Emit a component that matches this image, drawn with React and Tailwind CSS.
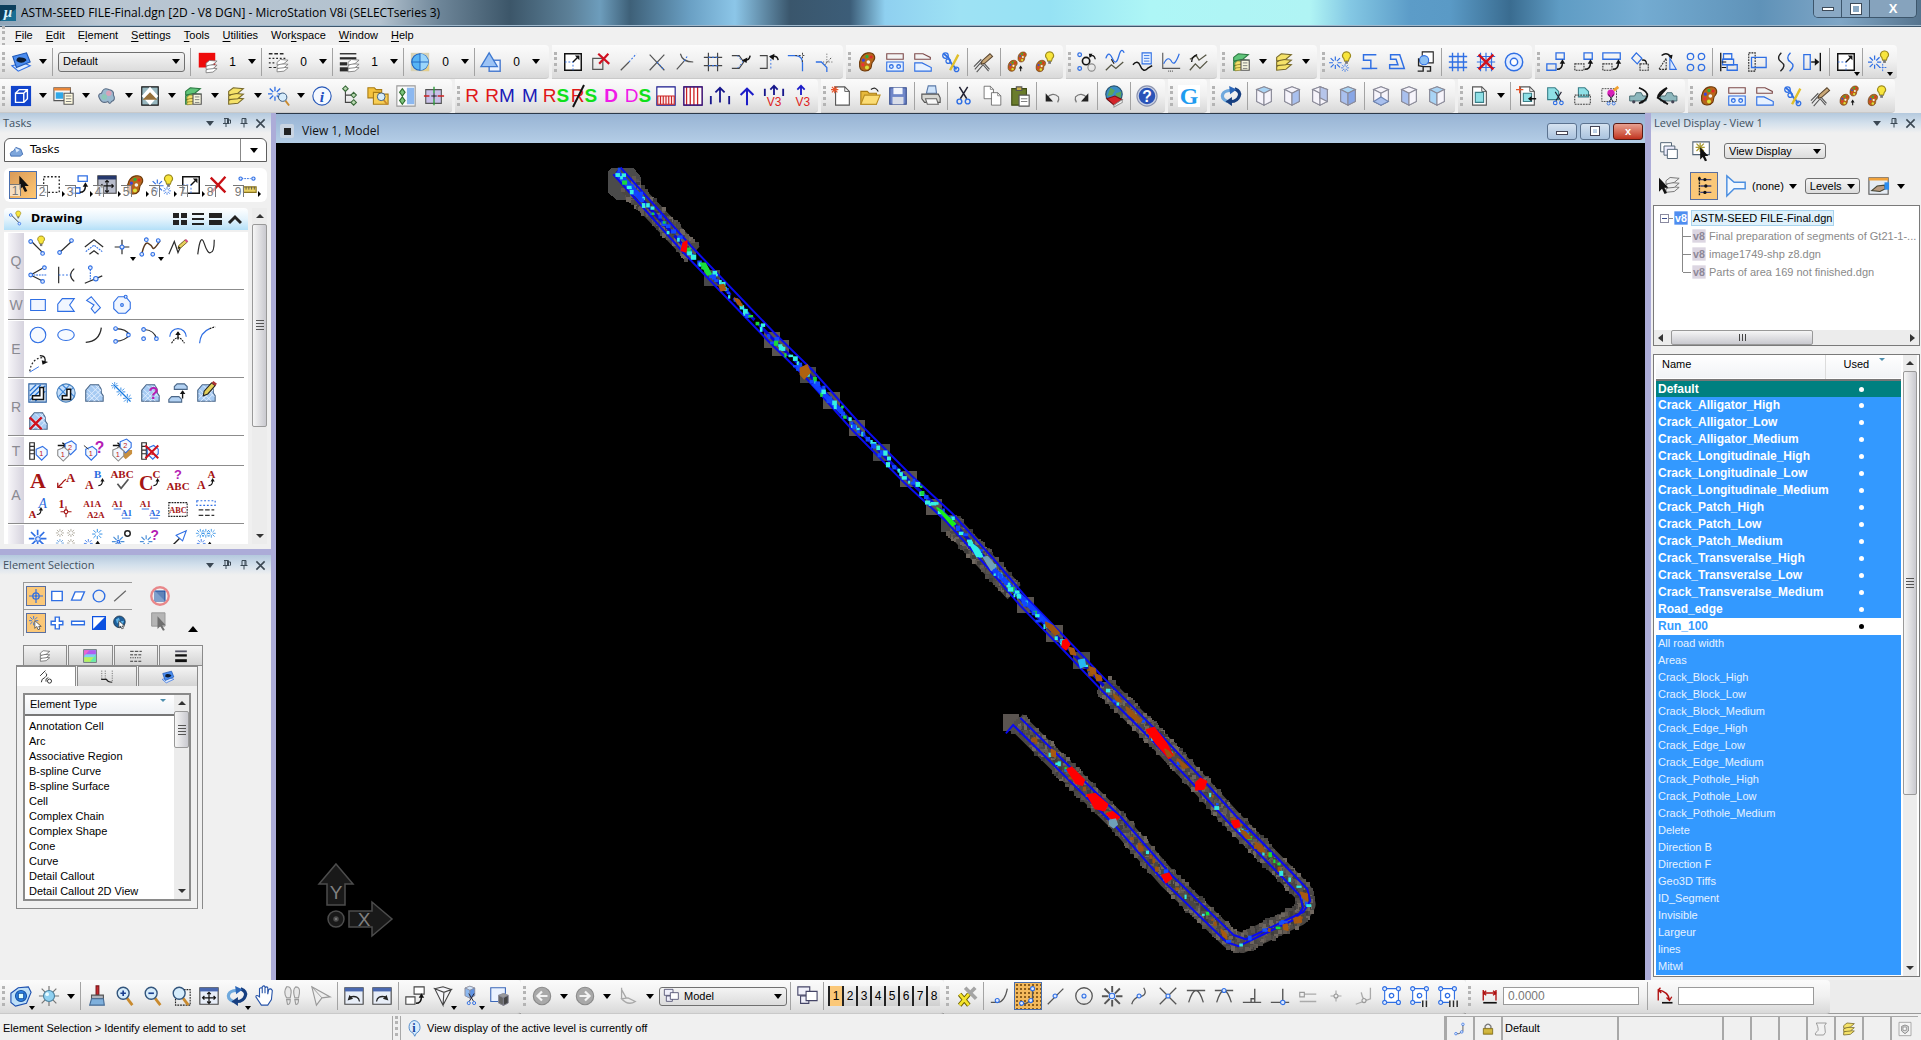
import React from "react";

/* ---------- drawing helpers (24 x 24 icon grid) ---------- */
const K = "#2b2b2b";
const B = "#2f6fe4";
const G = "#8b8b8b";
const R = "#c41414";
const N = "#17178c";

const s = (d, c = K, w = 1.4, dash) => ({ d, c, w, dash });
const f = (d, fill, c, w = 1.2) => ({ d, f: fill, c, w });
const at = (x, y, k, ...p) => ({ t: `translate(${x} ${y}) scale(${k})`, p });
const tx = (text, x, y, size, c, o = {}) => ({ text, x, y, size, c, ...o });
const ci = (x, y, r) => `M${x - r} ${y}a${r} ${r} 0 1 0 ${2 * r} 0a${r} ${r} 0 1 0 ${-2 * r} 0z`;
const re = (x, y, w, h) => `M${x} ${y}h${w}v${h}h${-w}z`;
const node = (x, y, r = 2) => f(ci(x, y, r), "#dfeaff", B);

const bulb = [f("M4 0a4 4 0 0 1 3 7l-1 3h-4l-1-3a4 4 0 0 1 3-7", "#f8e53c", "#9c8a1c"), f("M2.5 10h3v3h-3z", "#777")];
const cursor = [f("M0 0v14l3-3 2.5 5 2.4-1-2.5-5h4z", "#111")];
const palette = [
  f("M13 2c7-1 9 5 6 9c-3 2-1 4-3 8c-3 4-11 4-12-2c-1-7 2-14 9-15z", "#b8651a", "#6d3a0a"),
  f(ci(12, 6, 1.8), "#2fae3c"), f(ci(16.5, 6.5, 1.7), "#e02a2a"), f(ci(8, 10, 1.8), "#3c46d8"),
  f(ci(7.5, 15, 1.8), "#e33"), f(ci(12, 18, 2.2), "#d9e03c"), f(ci(13.5, 12, 2), "#f4f0e8"),
];
const layers = (c, e = "#444") => [
  f("M4 17l5-3 11 1-6 5-10 1z", c, e), f("M4 12l5-3 11 1-6 5-10 1z", c, e), f("M4 7l5-4 11 1-6 5-10 2z", c, e),
];
const rays = (c = B) => [s("M8 0v5M8 11v5M0 8h5M11 8h5M2 2l4 4M14 2l-4 4M2 14l4-4M14 14l-4-4", c, 1.5)];
const cube = (top, front, side) => [
  f("M12 2l8 3v13l-8 4-8-4V5z", "#fff", "#8a8a98"), f("M4 5l8-3 8 3-8 4z", top, "#8a8a98"),
  f("M4 5l8 4v13l-8-4z", front, "#8a8a98"), f("M20 5l-8 4v13l8-4z", side, "#8a8a98"),
];
const P = "#f6f4fb", Q = "#a9c0ee", SK = "#a9d4f5";
const lens = [s("M14 14l6 8", "#c98a2e", 3), f(ci(10, 9, 6.5), "#d6ecfb", "#33557c", 1.5)];
const win = [f(re(2, 3, 20, 18), "#e8eef8", "#444"), f(re(2, 3, 20, 4), "#4a68b0")];
const page = [f("M5 2h10l5 5v15H5z", "#fff", "#555"), s("M15 2v5h5", "#555", 1)];
const scissors = [s("M7 2l8 13M16 2L8 15", "#223", 1.6), s(ci(7, 18, 2.6), B, 1.6), s(ci(16, 18, 2.6), B, 1.6)];
const up = (x, y) => [s(`M${x} ${y}v-8`, "#111", 1.5), f(`M${x - 3} ${y - 5}l3-4 3 4z`, "#111")];
const hook = [s("M13 20q6 0 6-7", "#111", 1.6), f("M16 14l3-5 3 5z", "#111")];
const hatch = [
  f("M3 21V9l5-6h9l3 5v4l2 3v6z", "#a6caf2", "#4a6687"),
  s("M4 12l9 9M5 8l13 13M9 4l12 12M14 4l6 6M4 18L18 4M6 21L20 8M12 21l8-8", "#e2efff", 1),
];
const pencil = [f("M0 12l1-4L10 0l3 3L4 11z", "#e6cf5c", "#6d5a1c"), f("M9 1l2-2 3 3-2 2z", "#d64b8a"), f("M0 12l1-3 2 2z", "#111")];
const redX = [s("M3 4l16 16M19 3L4 20", "#c80f14", 2.6)];
const tag = (x, y, n, c = B) => [f(`M${x} ${y}l7-3 5 4v5l-6 6-6-6z`, "#f2f8ff", c), tx(n, x + 5.5, y + 7, 8, R)];
const v8 = (c, t) => [f(re(2, 2, 20, 20), c), tx("v8", 12, 18, 16, t, { b: 1 })];
const car = [f("M2 10h6l2-4h6l2 4h4v6H2z", "#8db7bd", "#4d7076"), f(ci(7, 17, 2), "#445"), f(ci(17, 17, 2), "#445")];
const box3 = (l) => [
  f(re(4, 4, 15, 15), "#fff", B), node(4, 4, 2.2), node(19, 4, 2.2), node(4, 19, 2.2), ...(l ? [] : [node(19, 19, 2.2)]), s(ci(11.5, 11.5, 2.4), B, 1.4),
  ...(l ? [f(re(13, 16, 10, 8), "#eee"), s(l === 1 ? "M15 17v7M19 17v7" : "M14 17v7M18 17v7M22 17v7", K, 1.6)] : []),
];

const ICONS = {
  app: [f(re(0, 0, 24, 24), "#0d3f5c"), f("M0 24L24 6v18z", "#1a6e93"), tx("μ", 12, 18, 23, "#d8f2fb", { b: 1, i: 1, serif: 1 })],
  template: [f("M2 16l13-3 7 3-13 6z", "#dcebff", B), f("M3 6l15-4 4 10-15 6z", "#4b8df0", "#1b55b5"), f("M7 11q0-5 5-4q5 0 6 3q-5 5-11 1z", "#0c1c33")],
  colorfill: [f(re(3, 2, 18, 16), "#ee0a0a"), at(8, 8, 0.75, ...layers("#fff", "#777"))],
  lstyle: [s("M2 3h18", K, 1.6, "4 2"), s("M2 8h18M2 13h8", K, 1.3, "2 2"), s("M2 18h9", K, 1.3, "3 2"), at(8, 7, 0.75, ...layers("#fff", "#777"))],
  lweight: [s("M2 3h18", K, 1.5), s("M2 8h18", K, 2.5), s("M2 14h8", K, 3.5), s("M2 20h9", K, 4.5), at(8, 7, 0.75, ...layers("#fff", "#777"))],
  transp: [f(re(2, 2, 20, 20), "#d8d2b4"), f(re(12, 12, 10, 10), "#e6cf8c"), f(ci(12, 12, 9), "#58b4f4", "#1b62c2"), f("M12 3v18a9 9 0 0 0 0-18z", "#9bd6fb"), s("M3 12h18M12 3v18", "#1e63bd", 1)],
  prio: [f(re(10, 10, 12, 12), "#eaf2ff", "#4f7fd0", 1.6), f("M10 2l9 15H1z", "#9cc3f5", "#3d78d0", 1.4)],
  scale: [f(re(3, 3, 18, 18), "#fff", "#111", 1.6), s("M3 12h9v9", B, 1, "2 2"), s("M12 12l6-6", "#111", 1.6), f("M14 5h5v5z", "#111")],
  delelem: [s(re(3, 8, 11, 12), "#555", 1.3), s("M9 3l12 11M20 3L10 14", "#d01020", 2.4)],
  ext: [s("M3 21l9-9", "#555", 1.3), s("M12 12l8-9", B, 1.2, "2 2")],
  ext2: [s("M4 4l16 17M20 4L4 21", "#555", 1.3), s("M12 12l8 9", B, 1.2, "2 2")],
  trim: [s("M3 20l8-9M7 3q2 9 14 9", "#555", 1.3), s("M11 11l4-6", B, 1.2, "2 2")],
  inter: [s("M7 2v20M17 2v20", "#444", 1.3), s("M2 7h20M2 16h20", "#444", 1.3), s("M7 7h10M7 16h10", B, 1.2, "2 2")],
  mod1: [s("M2 5h8l5 7-5 7H2", "#444", 1.2), s("M8 5l6 7-6 7", B, 1, "2 2"), s("M22 5q-1 5-5 5", "#111", 1.6), f("M19 7l-6 3 5 3z", "#111")],
  mod2: [s("M2 5h8v14H2", "#444", 1.2), s("M14 5v14", B, 1, "2 2"), s("M22 10q-1-5-6-4", "#111", 1.6), f("M18 3l-6 3 5 4z", "#111")],
  fillet: [s("M2 5h8q8 0 8 8v9", B, 1.4), s("M10 5h11M18 2v10", "#444", 1.1, "2 2")],
  chamfer: [s("M2 12h6l6 6v5", B, 1.4), s("M10 12h10M14 3v12", "#444", 1, "1 2"), s("M12 15L20 6", "#444", 1, "2 2")],
  palette,
  attrs: [s(re(3, 3, 18, 6), "#7d4a4a", 1.2), f(re(3, 12, 18, 10), "#e8f2ff", B), s(ci(8, 17, 2), B), s(ci(16, 17, 2), B)],
  attrs2: [s("M3 9V3h9l8 4v2z", "#7d4a4a", 1.2), f("M3 22V13h8l10 5v4z", "#e8f2ff", B)],
  pens: [s("M4 3l5 4 3 6 6 7", B, 2), s(ci(6, 5, 3), B), s(ci(9, 11, 2.5), B), s(ci(18, 20, 2.5), B), s("M20 4l-9 17", "#e0bf2a", 2.6)],
  hatchpen: [s("M2 20l8-9 8 9M4 23l7-8 6 7M1 17l8-8", "#555", 1.2), at(9, 3, 0.95, f("M0 12l1-4L10 0l3 3L4 11z", "#c9a878", "#5a4630"))],
  pal2: [at(0, 9, 0.6, ...palette), at(11, 0, 0.55, ...palette), at(16, 22, 0.7, s("M0 0v-6", "#111", 1.6), f("M-3-4l3-5 3 5z", "#111"))],
  pal3: [at(0, 9, 0.62, ...palette), at(13, 1, 1, ...bulb)],
  grp1: [s(ci(11, 11, 4), "#111", 1.8), s(ci(17, 18, 4), G, 1.2), s(ci(4, 4, 2), B), s(ci(4, 19, 2), B), s("M15 6q5-3 6 3", "#111", 1.4), f("M14 3l4 0-3 5z", "#111")],
  grp2: [s("M2 8q3-9 7 0t7-2t6-4", B, 1.4), s("M2 21l6-6 5 4 8-7", "#554", 1.4), s("M8 9l3 5", "#111", 1.2)],
  grp3: [f(re(11, 2, 10, 12), "#e8f2ff", B), s("M13 5h6M13 8h6M13 11h6", B, 1), s("M1 15q5-6 8 1q3 8 8 3l5-3", "#111", 1.6)],
  grp4: [s("M3 2v17h19", "#555", 1.2), s("M4 14q5-10 9-2q3 5 8-9", B, 1.3), s("M9 22h6", "#555", 1.4, "1 1")],
  grp5: [s("M2 9l7-4 3 5 8-6", "#554", 1.4), s("M2 21l6-7 5 5 8-8", "#554", 1.4), s("M4 12q0-6 6-8", "#111", 1.4)],
  levmgr: [...layers("#5fc479", "#2c7a42"), at(3, 9, 0.6, ...layers("#f3e06c", "#8a7a22")), f(re(12, 10, 9, 11), "#f7f7e0", "#555"), s("M14 13h5M14 16h5M14 19h5", "#777", 1)],
  levdisp: layers("#f5e269", "#77692a"),
  acs: [at(-1, 6, 0.85, ...rays()), at(14, 1, 1, ...bulb), at(12, 14, 0.55, ...rays())],
  acs2: [s("M20 4H6v6h8v9H4", B, 1.6), s("M14 19h7", B, 1.6)],
  acs3: [s("M5 4h10l5 15H4v-4h9l-2-6H5z", B, 1.6)],
  acs4: [f(re(9, 1, 12, 12), "#fff", "#222"), f(ci(11, 10, 5), "#8cc0f4", B), s("M5 8v8l5 1v5H4M10 17h8v5h-4", "#222", 1.5)],
  grid: [s("M6 2v20M12 2v20M18 2v20M2 6h20M2 12h20M2 18h20", B, 1.5)],
  gridx: [s("M6 2v20M12 2v20M18 2v20M2 6h20M2 12h20M2 18h20", B, 1.3), s("M4 4l16 16M20 4L4 20", "#d0101c", 2.6)],
  donut: [f(ci(12, 12, 9.5), "#e1ecff", B, 1.6), f(ci(12, 12, 4), "#fff", B, 1.6)],
  m1: [s(re(2, 14, 10, 7), B), s(re(12, 2, 9, 7), B), ...hook],
  m2: [s(re(2, 14, 10, 7), "#333", 1.2, "2 1"), s(re(12, 2, 9, 7), B), ...hook],
  m3: [s(re(2, 14, 10, 7), "#333", 1.2, "2 1"), s(re(2, 2, 19, 7), B), ...hook],
  m4: [s("M8 2l6 6-5 6-6-6z", B), s(re(12, 14, 9, 7), "#333", 1.2, "2 1"), s("M19 14q0-5-5-4", "#111", 1.4)],
  m5: [s("M10 20V8L2 20z", "#333", 1.2, "2 1"), f("M14 20V8l7 12z", "#dce9ff", B), s("M5 5q5-4 9 0", "#111", 1.5), f("M12 5l5-1-1 5z", "#111")],
  m6: [s(ci(6, 6, 3.5), B), s(ci(18, 6, 3.5), B), s(ci(6, 18, 3.5), B), s(ci(18, 18, 3.5), B)],
  m7: [s("M3 2v20", "#111", 1.4), s(re(6, 3, 9, 6), B), s(re(5, 9, 12, 6), B), s(re(10, 15, 11, 6), B), s("M9 12H4M9 18H4", "#111", 1.3)],
  m8: [s("M3 2h7v20H3z", "#222", 1.2, "2 1"), s(re(6, 7, 16, 11), B)],
  m9: [s("M8 2q-6 6 0 10t-1 10", "#222", 1.5), s("M18 2q-6 6 0 10t-1 10", B, 1.5)],
  m10: [s(re(2, 4, 7, 16), B), s("M20 2v20", "#111", 1.5), s("M10 12h6", "#111", 1.5), f("M14 8l5 4-5 4z", "#111")],
  acs5: [at(0, 5, 0.9, ...rays()), at(14, 0, 1, ...bulb), s("M16 14v8M12 18h8", B, 1, "2 1")],
  /* primary tools row */
  model: [f(re(1, 1, 22, 22), "#1144cc"), s("M6 9h9v10H6zM6 9l4-4h9v10l-4 4M15 9l4-4", "#fff", 1.5)],
  refs: [f(re(1, 3, 18, 14), "#f6f6f6", "#555"), f(re(1, 3, 18, 3), "#e8873a"), f(re(3, 8, 8, 7), "#2fa8e8"), f(re(12, 9, 10, 12), "#fffbe0", "#555"), s("M14 12h6M14 15h6M14 18h6", "#777", 1)],
  cloud: [f("M4 15q-3-5 2-6q2-7 8-4q6 1 5 6q3 5-2 7q-2 4-4 0q-6 3-9-3z", "#9ab9cf", "#5b6d86"), f(ci(14, 9, 3), "#d7a3b8"), f(ci(9, 13, 3), "#8cc8b8")],
  raster: [f(re(3, 2, 18, 20), "#98b8c0", "#111"), f("M3 12l9-10 9 10-9 10z", "#fff"), f("M4 16l8-8 8 8z", "#96703a")],
  acsd: [at(0, 2, 0.95, ...rays()), at(9, 7, 0.7, ...lens)],
  info: [f(ci(12, 12, 10), "#f5f9ff", "#2758b8"), tx("i", 12, 18, 17, "#1d4fc0", { b: 1, i: 1, serif: 1 })],
  tree: [s("M7 4v15h8M7 11h8", "#444", 1.2), f("M7 1l3 3-3 3-3-3z", "#b8d8b0", "#3a6a3a"), f("M16 8l3 3-3 3-3-3z", "#b8d8b0", "#3a6a3a"), f("M16 16l3 3-3 3-3-3z", "#b8d8b0", "#3a6a3a")],
  folders: [f("M1 3h7l2 2h6v9H1z", "#f5c23c", "#a97c14"), f("M7 8h7l2 2h7v11H7z", "#f8ce55", "#a97c14"), at(9, 7, 0.65, ...lens)],
  ptree: [f(re(2, 1, 20, 22), "#fafafa", "#999"), f(re(13, 3, 8, 18), "#8cb8f0"), f("M8 4l3 4-3 4-3-4zM8 13l3 4-3 4-3-4z", "#7cc47c", "#2d6d2d")],
  accu: [f(re(3, 5, 17, 15), "#c9c0e8", "#555"), s("M12 2v7M12 15v7", "#2b9b3a", 1.5), s("M1 12h6M16 12h7", "#c22", 1.5), s("M9 12h6M12 9v6", "#111", 1)],
  hist1: [f(re(2, 2, 20, 20), "#fff", N), f(re(3, 12, 18, 9), "#fbeaea", "#c22"), s("M6 12v9M9 12v9M12 12v9M15 12v9M18 12v9", "#c22", 1.2)],
  hist2: [f(re(2, 2, 20, 20), "#fff", "#c01a3a"), s("M5 2v20M9 2v20M13 2v20M17 2v20", "#c22", 1.4), s(re(2, 2, 20, 20), N, 1.2)],
  arr1: [s("M12 19V3M7 8l5-5 5 5", N, 2), s("M2 12v9M22 12v9", N, 2)],
  arr2: [s("M12 22V4M5 11l7-7 7 7", "#1c1cc8", 2.2)],
  arr3: [s("M12 11V1M8 5l4-4 4 4", N, 2), s("M2 4v8M22 4v8", N, 2), tx("V3", 12, 23, 13, "#d22")],
  arr4: [s("M12 11V1M8 5l4-4 4 4", "#1c1cc8", 2), tx("V3", 14, 23, 13, "#d22")],
  newf: [...page, s("M4 1v8M0 5h8M1 2l6 6M7 2L1 8", "#e5542a", 1.2)],
  open: [f("M2 7h7l2 2h8v12H2z", "#e6b93c", "#a97c14"), f("M6 11h17l-4 10H2z", "#fbdc74", "#b98d20"), s("M13 5q5-4 8 2", "#222", 1.3)],
  save: [f(re(3, 3, 18, 18), "#6f86c8", "#334a8c"), f(re(7, 3, 10, 7), "#f2f5fc"), f(re(6, 13, 12, 8), "#d9dde8")],
  print: [f("M7 9l2-8h8l1 8z", "#cfe4fb", "#5a79a8"), f("M2 10h18l2 4v5H5l-3-4z", "#d7d7d2", "#555"), f("M6 15h12l2 6H8z", "#f8f8f8", "#666")],
  cut: scissors,
  copy: [at(0, 0, 0.68, ...page), at(8, 7, 0.68, ...page)],
  paste: [f(re(3, 4, 16, 18), "#6a7c2c", "#3d4a12"), f(re(8, 2, 6, 4), "#c9b04a", "#555"), f(re(11, 11, 11, 12), "#fff", "#555"), s("M13 15h7M13 18h7", "#777", 1)],
  undo: [s("M5 14q7-7 13-1q1 3-1 6", "#777", 1.3), f("M4 9v9h8z", "#222")],
  redo: [s("M19 14q-7-7-13-1q-1 3 1 6", "#777", 1.3), f("M20 9v9h-8z", "#222")],
  geo: [f(ci(12, 10, 9), "#3a8cc4", "#24506e"), f("M8 3l5 3-3 5-5 1zM14 9l6-2-1 8-5 1z", "#5aa65a"), f("M4 15l9-3 8 4-9 6z", "#d3242a", "#7c1014"), f("M12 22l9-6v3l-9 5z", "#fff", "#999")],
  help: [f(ci(12, 12, 11), "#c8d0e4", "#8b93ad"), f(ci(12, 12, 9), "#2a53b8"), tx("?", 12, 18, 17, "#fff", { b: 1 })],
  ggl: [f(re(0, 0, 24, 24), "#fff"), tx("G", 12, 21, 26, "#1e9cf0", { b: 1, serif: 1 })],
  rotview: [s("M8 18q-7-3-5-8q2-4 8-4", "#6fa9dd", 3.5), s("M16 4q7 3 5 8q-2 6-9 6", "#173f80", 3.5), f("M13 13v10l-7-5z", "#173f80"), f("M10 1l8 4-7 5z", "#2c67b8")],
  cTop: cube(SK, P, P), cFront: cube(P, P, Q), cRight: [...cube(P, P, P), f("M12 9V2l8 3v13l-8-4z", "#b6c5ea", "#8a8a98")],
  cBack: cube(SK, Q, "#88a6e6"), cBot: [...cube(P, P, P), f("M4 18l8-5 8 5-8 4z", Q, "#6f86b4")], cLeft: cube(P, Q, P), cIso: cube(SK, SK, P),
  clip0: [...page, f(re(8, 8, 9, 11), "#8fe0e6", "#3a7f88")],
  clip1: [...page, f(re(8, 9, 9, 9), "#8fe0e6", "#3a7f88"), s("M4 1v8M0 5h8", "#e5542a", 1.4), s("M22 15h-7", "#111", 1.6), f("M17 12l-4 3 4 3z", "#111")],
  clip2: [f("M4 3h8l4 4v9H4z", "#8fe0e6", "#3a7f88"), at(7, 6, 0.75, ...scissors)],
  clip3: [f("M7 3h7l4 4v6H7z", "#8fe0e6", "#3a7f88"), s(re(3, 11, 17, 10), "#444", 1.2, "2 1")],
  clip4: [s("M2 4h16v14H2z", "#444", 1, "2 1"), f(ci(12, 9, 4), "#d81fb8"), s("M15 6l5-4", "#f0a030", 3), at(5, 9, 0.62, ...scissors)],
  car1: [at(0, 3, 0.9, ...car), s("M12 3q10 4 9 9t-9 8", "#111", 2)],
  car2: [at(3, 3, 0.9, ...car), s("M12 3q-10 5-10 11M12 3L2 14l11 7", "#111", 2)],
  /* task bar */
  arrowsel: [at(8, 2, 1.1, ...cursor)],
  fence: [s(re(4, 3, 17, 17), "#222", 1.4, "2 2")],
  manip: [s(re(11, 2, 10, 6), B), s(re(5, 15, 8, 6), B), ...hook],
  view4: [f(re(2, 2, 20, 19), "#b8bccb", "#444"), f(re(2, 2, 20, 4), "#26386c"), s("M12 7v13M5 13h14M10 9l2-2 2 2M10 18l2 2 2-2M7 11l-2 2 2 2M17 11l2 2-2 2", "#111", 1.2)],
  delx: redX,
  measure: [s("M6 5h10", B, 1, "2 1"), node(5, 5, 1.8), node(19, 5, 1.8), f(re(8, 14, 14, 6), "#e8d062", "#8a7420"), s("M11 14v3M14 14v3M17 14v3M20 14v3", "#555", 1)],
  smartline: [s("M5 6l13 13", K, 1.3), node(4, 6, 2), node(17, 19, 2), at(12, 0, 0.85, ...bulb)],
  line: [s("M5 18L18 6", K, 1.3), node(5, 18, 2), node(18, 5, 2)],
  mline: [s("M2 12l10-8 10 8M7 20l5-4 5 4", K, 1.3), s("M3 17l9-7 9 7", B, 1.2, "2 1")],
  point: [s("M12 4v16M4 12h16", K, 1.3), node(12, 12, 2.2)],
  curve: [s("M3 20q3-14 7-12t5 5t8-8", "#5a3a20", 1.6), node(3, 20, 2), node(8, 4, 2), node(15, 20, 2), node(21, 5, 2)],
  sketch: [s("M2 20L8 6l4 12 5-11", K, 1.3), at(12, 4, 0.8, ...pencil)],
  stream: [s("M3 20Q6-4 10 8t7 10q4 0 4-14", K, 1.3)],
  angle: [s("M4 12l14-8M4 12l14 7", K, 1.3), s("M4 12h17", B, 1.2, "2 1"), node(4, 12, 2), node(19, 4, 2), node(17, 19, 2)],
  minline: [s("M4 3v18M21 5q-8 7 0 14", K, 1.3), s("M4 12h13", B, 1.2, "2 2")],
  atang: [s("M2 21l19-8", K, 1.3), s("M8 6v12", B, 1.2, "2 1"), node(8, 4, 2), node(14, 16, 2.4)],
  rect: [f(re(4, 6, 16, 12), "#f1f6ff", B)],
  shape: [f("M3 19V11l5-6h13l-5 7 5 7z", "#f1f6ff", B)],
  oshape: [f("M4 7l5-4 10 12-6 6-4-5 3-4z", "#f1f6ff", B)],
  poly: [f("M8 3h8l5 6v7l-5 5H8l-5-5V9z", "#f1f6ff", B), node(12, 12, 1.5), node(16, 3, 1.6)],
  circle: [f(ci(12, 12, 8.5), "#f6faff", B)],
  ellipse: [f("M3 12a9 6 0 1 0 18 0a9 6 0 1 0-18 0z", "#f6faff", B)],
  arc: [s("M3 20Q18 19 20 4", K, 1.4)],
  arc2: [s("M5 5q12 0 15 7q-4 6-15 7", K, 1.3), node(5, 5, 2), node(19, 12, 2), node(5, 19, 2)],
  arc3: [s("M6 6q11 1 13 10", K, 1.3), node(5, 6, 2), node(19, 16, 2), node(5, 16, 2)],
  arc4: [s("M3 14a9 9 0 0 1 18 0", B, 1.3), s("M5 21q7-12 14 0", "#111", 1.2, "2 1"), ...up(12, 17)],
  arc5: [s("M5 21q1-12 11-16", B, 1.3), s("M16 5l6-2", "#111", 1.3, "2 1")],
  arc6: [s("M3 21q2-14 14-15", "#222", 1.3, "2 2"), s("M14 4q8 0 5 8", "#111", 1.4), f("M16 9l7 2-6 3z", "#111"), s("M3 22l10-6", B, 1)],
  hat1: [f(re(2, 2, 19, 20), "#cfe4fb", "#2b5fa0"), s("M3 10l7-7M3 15L15 3M3 20L20 4M9 21L20 10", "#2470d0", 1.4), f("M14 6h4v13H6v-4h8z", "#fff", "#111", 1.6)],
  hat2: [f(ci(12, 12, 10), "#c4defa", "#4b80b8"), s("M4 6l14 14M8 3l13 13M4 16L16 3M7 20L20 6", "#3d86d8", 1.2), f("M13 8h4v11H8v-4h5z", "#fff", "#111", 1.6)],
  hat3: hatch,
  hat4: [at(0, 0, 0.5, ...rays("#1478e0")), at(6, 6, 0.6, ...rays("#1478e0")), at(13, 13, 0.6, ...rays("#1478e0")), s("M3 3l18 18", "#1478e0", 1.4)],
  hat5: [...hatch, tx("?", 16, 18, 18, "#b41cb4", { b: 1 })],
  hat6: [f("M8 8V5l3-3h8l3 3v3zM2 22v-3l3-3h8l3 3v3z", "#b3d2f3", "#4a6687"), ...up(17, 18)],
  hat7: [...hatch, at(9, 1, 1, f("M0 14l1-5L9 0l4 3L5 12z", "#e3cf5a", "#222"), f("M9 0l2-2 4 3-2 2z", "#a33"))],
  hat8: [...hatch, s("M3 8l13 13M16 8L3 21", "#d0101c", 2.6)],
  tag1: [s("M3 3h5v18H3zM3 7h5M3 11h5M3 15h5", K, 1.3), ...tag(10, 10, "1")],
  tag2: [s("M3 6h8M8 3l4 3-4 3", "#111", 1.5), ...tag(11, 4, "2"), ...tag(3, 11, "1", G)],
  tag3: [...tag(3, 10, "1"), s("M1 6l5 4", K, 1), tx("?", 18, 14, 17, "#b41cb4", { b: 1 })],
  tag4: [s("M2 6h8M7 3l4 3-4 3", "#111", 1.5), f("M10 15l6 6 7-6v-4H10z", "#c89040"), ...tag(10, 2, "2"), ...tag(2, 11, "1", G)],
  tag5: [s("M3 3h5v18H3zM3 7h5M3 11h5M3 15h5", K, 1.3), ...tag(9, 9, "1"), s("M7 6l14 14M21 6L7 20", "#d0101c", 2.2)],
  tA: [tx("A", 12, 20, 24, "#a51414", { b: 1, serif: 1 })],
  tA2: [tx("A", 17, 13, 14, "#a51414", { b: 1, serif: 1 }), s("M12 10Q9 12 8 14L3 19M3 14v5h5", "#a51414", 1.4)],
  tA3: [tx("B", 16, 9, 12, "#2a6ae0", { b: 1, serif: 1 }), tx("A", 7, 21, 13, "#a51414", { b: 1, serif: 1 }), at(7, 2, 0.75, ...hook)],
  tA4: [tx("ABC", 12, 9, 12, "#a51414", { b: 1, serif: 1 }), s("M7 15l4 5 8-10", "#555", 1.8)],
  tA5: [tx("C", 8, 22, 22, "#a51414", { b: 1, serif: 1 }), tx("C", 19, 9, 12, "#a51414", { b: 1, serif: 1 }), at(6, 2, 0.75, ...hook)],
  tA6: [tx("?", 12, 10, 14, "#b41cb4", { b: 1 }), tx("ABC", 12, 22, 12, "#a51414", { b: 1, serif: 1 })],
  tA7: [tx("A", 18, 9, 12, "#a51414", { b: 1, serif: 1 }), tx("A", 7, 21, 13, "#a51414", { b: 1, serif: 1 }), at(5, 2, 0.75, ...hook)],
  tA8: [tx("A", 17, 11, 15, "#2a6ae0", { i: 1, serif: 1 }), tx("A", 6, 22, 12, "#a51414", { b: 1, serif: 1 }), at(1, 3, 0.75, ...hook)],
  tA9: [tx("1", 7, 11, 13, "#a51414", { b: 1, serif: 1 }), s("M12 9v12M6 15h12", "#a51414", 1.2), f(ci(12, 15, 2), "#fff", "#a51414")],
  tA10: [tx("A1A", 10, 10, 10, "#a51414", { b: 1, serif: 1 }), tx("A2A", 14, 22, 10, "#a51414", { b: 1, serif: 1 })],
  tA11: [tx("A1", 7, 10, 10, "#a51414", { b: 1, serif: 1 }), tx("A1", 17, 20, 10, "#2a6ae0", { b: 1, serif: 1 }), s("M3 12h8M12 22h9", "#2a6ae0", 1)],
  tA12: [tx("A1", 7, 10, 10, "#a51414", { b: 1, serif: 1 }), tx("A2", 17, 20, 10, "#2a6ae0", { b: 1, serif: 1 }), s("M3 12h8M12 22h9", "#2a6ae0", 1)],
  tA13: [s(re(2, 5, 20, 15), "#222", 1.2, "2 1"), tx("ABC", 12, 16, 9, "#a51414", { b: 1, serif: 1 })],
  tA14: [s(re(2, 3, 20, 5), B, 1.3, "2 2"), s("M4 13h17M4 19h17", "#333", 1.4, "5 2")],
  c1: [at(2, 2, 1.2, ...rays()), node(12, 12, 2.5)],
  c2: [at(1, 1, 0.55, ...rays("#a09a8c")), at(13, 1, 0.55, ...rays("#a09a8c")), at(1, 12, 0.55, ...rays("#4b8fd8")), at(13, 12, 0.55, ...rays("#a09a8c"))],
  c3: [at(10, 1, 0.7, ...rays("#2d8ee6")), at(1, 12, 0.6, ...rays()), ...up(16, 23)],
  c4: [at(1, 8, 0.85, ...rays("#4b8fd8")), s(ci(18, 6, 3), "#222", 1.6), node(8, 15, 1.5)],
  c5: [at(1, 8, 0.85, ...rays("#4b8fd8")), tx("?", 17, 13, 15, "#b41cb4", { b: 1 })],
  c6: [s("M3 22L16 9", "#222", 1.5), f("M10 8l11-5-4 11z", "#fff", B)],
  c7: [at(1, 1, 0.6, ...rays("#2d8ee6")), at(7, 1, 0.6, ...rays("#2d8ee6")), at(13, 1, 0.6, ...rays("#2d8ee6")), at(2, 12, 0.6, ...rays()), ...up(16, 24)],
  /* selection panel */
  selInd: [s("M12 0v24M0 12h24", B, 2), s(ci(12, 12, 5.5), B, 2.2), s(ci(12, 12, 1), B, 1.5)],
  selBlock: [f(re(3, 4, 18, 16), "#fff", B, 2.4)],
  selShape: [f("M7 5h16l-6 14H1z", "#fff", B, 2.4)],
  selCircle: [s(ci(12, 12, 10), B, 2.4)],
  selLine: [s("M2 21L22 3", "#666", 2)],
  selNew: [at(0, 0, 1, ...rays()), at(10, 8, 1.1, f("M0 0v12l3-3 2 5 3-1-2-4h4z", "#fff", "#444"))],
  selPlus: [f("M9 2h7v7h6v6h-6v7H9v-7H2V9h7z", "#fff", B, 2.4)],
  selMinus: [f(re(1, 9, 22, 6), "#fff", B, 2.2)],
  selInv: [f(re(1, 1, 22, 22), "#fff", "#0b50e0", 2), f("M23 1v22H1z", "#0b50e0")],
  selAll: [f(ci(11, 10, 10), "#1d5f9c", "#123"), f("M5 6l5-3 2 5-5 5zM13 9l6-1-3 7z", "#5fb4e8"), at(10, 8, 1, f("M0 0v12l3-3 2 5 3-1-2-4h4z", "#fff", "#333"))],
  stop: [s(ci(12, 12, 10.5), "#e8878a", 2.8), f(re(6, 6, 12, 12), "#5f83b8", "#1b4a9c"), f("M6 6l12 12H6z", "#7fa0cc")],
  graycur: [f(re(2, 1, 16, 16), "#b5b5b5", "#999"), at(9, 5, 1.1, f("M0 0v14l3-3 3 5 2-1-3-5h4z", "#6f6f6f"))],
  tLayers: layers("#fff", "#555"),
  tColor: [f(re(1, 1, 22, 22), "#7fd0f0", "#555"), f("M2 2h20v7H2z", "#b05cf0"), f("M2 14h20v8H2z", "#b9f05c"), f("M2 2h9L2 12z", "#ee66cc"), f("M22 10v12H12z", "#66e8b0")],
  tStyle: [s("M2 4h20", K, 1.6, "6 2"), s("M2 10h20M2 21h20", K, 1.6, "5 2"), s("M2 15h20", K, 1.6, "2 2")],
  tWeight: [s("M2 4h20", "#556", 3), s("M2 11h20", "#111", 4), s("M2 20h20", "#111", 5)],
  tTypes: [s("M2 10L11 1M4 21q0-6 6-8q6-5 1-8M12 20q-2-5 4-7", K, 1.6), s(ci(18, 19, 3.5), K, 1.6)],
  tTag: [s("M3 1v15M9 1v15M21 1v20", "#555", 1.3, "2 2"), s("M2 16h9q2 5 10 5", "#222", 2)],
  /* level display */
  wins: [f(re(2, 2, 13, 11), "#fff", "#567"), f(re(6, 6, 13, 11), "#eef", "#567"), f(re(10, 10, 12, 11), "#fff", "#567")],
  winpick: [f(re(2, 2, 18, 14), "#fff", "#567"), s("M10 3v10M5 8h10M6 4l8 8M14 4l-8 8", "#a89830", 1.4), at(10, 8, 0.95, ...cursor)],
  laypick: [at(4, 0, 0.9, ...layers("#eee", "#777")), at(0, 3, 1.1, ...cursor)],
  treeview: [s("M7 2v20", "#222", 1.5, "2 1"), s("M8 5h12M8 12h12M8 19h12", "#447", 1.4), f(ci(7, 4, 1.6), "#111"), f(ci(14, 12, 1.8), "#111"), f(ci(13, 19, 1.8), "#111"), f(ci(13, 5, 1.8), "#111")],
  filter: [f("M2 1l8 7h12v7H10l-8 8z", "#f1f8ff", "#4c8fe0", 1.6)],
  handpic: [f(re(1, 3, 21, 18), "#e6ecf4", "#555"), f(re(1, 3, 21, 3), "#f0a23c"), f("M4 17l6-5 8-1 1 4-6 3z", "#b99a80", "#443"), f(re(18, 8, 5, 8), "#2a8cf0")],
  v8on: v8("#4f8df0", "#fff"), v8off: v8("#dcd6e2", "#8e8898"),
  /* view controls */
  vattr: [f("M1 9l8-6 11-1 3 6-5 12-12 3-5-4z", "#bfe0f8", "#1c4fae"), f(ci(12, 12, 6), "#2f86e8", "#1650a0"), f(re(9, 9, 6, 6), "#dff", "#1650a0")],
  sun: [s("M12 1v22M1 12h22M4 4l16 16M20 4L4 20", "#777", 1.3), f(ci(12, 12, 6), "#8fd0f0", "#4b7f9c"), f(ci(10, 10, 2), "#e8faff")],
  brush: [f(re(11, 1, 3, 10), "#c8282c", "#7c1418"), f(re(6, 11, 13, 4), "#b0b4bc", "#555"), f("M6 15h13l1 7H4z", "#7fb0dc", "#446a94")],
  zin: [...lens, s("M7 9h6M10 6v6", "#1a3f90", 1.8)], zout: [...lens, s("M7 9h6", "#1a3f90", 1.8)],
  zwin: [s(re(6, 5, 16, 17), "#222", 1.2, "2 1"), ...lens],
  fit: [...win, s("M12 8v12M5 14h14M10 10l2-2 2 2M10 18l2 2 2-2M7 12l-2 2 2 2M17 12l2 2-2 2", "#111", 1.3)],
  hand: [f("M8 22l-6-9q0-3 4 0V4q2-2 3 0v5V2q2-2 3 0v7V3q2-2 3 0v7l1-5q2-2 4 1l-1 10-4 6z", "#fff", "#2653a8")],
  feet: [f("M5 2q5-1 5 6l-1 6H5Q1 8 5 2zM5 16h4q0 6-3 5zM15 2q5 0 4 7l-1 5h-4Q11 5 15 2zM14 16h4q0 6-3 5z", "#e8e8e8", "#999")],
  fly: [f("M2 2l20 11-9 1-6 8z", "#eee", "#999"), s("M2 2l11 12", "#999", 1)],
  vprev: [...win, s("M18 18q-1-7-10-5", "#222", 1.4), f("M5 17l2-6 4 4z", "#222")],
  vnext: [...win, s("M6 18q1-7 10-5", "#222", 1.4), f("M19 17l-2-6-4 4z", "#222")],
  vcopy: [f(re(11, 2, 11, 8), "#fff", "#444"), f(re(2, 13, 10, 8), "#fff", "#444"), ...hook],
  persp: [f("M3 4l9-2 9 3-8 3zM3 4l10 4-1 14zM21 5l-8 3-1 14z", "#f4f4f8", "#444")],
  clipv: [at(3, 0, 0.65, ...cube("#cfe4fb", "#8cb8f0", "#5f93e4")), at(5, 8, 0.65, ...scissors)],
  mask: [f("M3 3h16v6l-8 9H3z", "#eaf2ff", "#3d68b8"), at(9, 8, 0.65, ...cube("#999", "#666", "#444"))],
  back: [f(ci(12, 12, 9.5), "#a9a9a9", "#8a8a8a"), s("M18 12H7M12 7l-5 5 5 5", "#f3f3f3", 2.4)],
  fwd: [f(ci(12, 12, 9.5), "#a9a9a9", "#8a8a8a"), s("M6 12h11M12 7l5 5-5 5", "#f3f3f3", 2.4)],
  saved: [s("M5 3v12M5 15q7 8 15 3l-8-4zM5 5l5 9", "#a8a8a8", 1.4)],
  vgrp: [f(re(2, 2, 13, 9), "#f0f0fa", "#446"), f(re(5, 12, 9, 8), "#f0f0fa", "#446"), f(re(11, 7, 12, 10), "#fff", "#446")],
  snapx: [s("M10 3l12 12M21 3L9 15", "#a4a4a4", 4), s("M4 10l10 12M14 10L4 22", "#6e6200", 5), s("M4 10l10 12M14 10L4 22", "#f5e42a", 3)],
  s1: [s("M2 19h6q9 1 12-15", "#555", 1.3), node(9, 17, 2.2)],
  s2: [s("M4 20h6l7-4V5", "#555", 1.5), node(5, 20, 2.2), node(17, 4, 2.2), node(15, 17, 2.2)],
  s3: [s("M3 21L20 4", "#555", 1.4), node(11, 12, 2.2)],
  s4: [s(ci(12, 12, 9), "#555", 1.4), node(12, 12, 2.2)],
  s5: [at(1, 1, 1.4, ...rays("#555")), node(12, 12, 3)],
  s6: [s("M3 21q2-7 8-8q10-2 5-10", "#555", 1.4), node(11, 12, 2.2)],
  s7: [s("M3 3l18 18M21 3L3 21", "#555", 1.4), node(12, 12, 2.2)],
  s8: [s("M2 6h20M4 19q4-13 8-13t8 13", "#555", 1.4)],
  s9: [s("M2 6h20M4 19q4-13 8-13t8 13", "#555", 1.4), node(12, 6, 2.2)],
  s10: [s("M2 19h20M15 19V4M11 19v-4h4", "#555", 1.5)],
  s11: [s("M2 19h20M15 19V4", "#555", 1.5), node(15, 19, 2.4)],
  s12: [s("M3 18h18M8 10h13", "#aaa", 1.4), s(re(3, 8, 5, 5), "#999", 1.2)],
  s13: [s("M12 6v12M6 12h12", "#aaa", 1.3), f(ci(12, 12, 2.2), "#eee", "#999")],
  s14: [s("M3 21l16-6V3M9 8q2 10 6 8", "#aaa", 1.4), f(ci(12, 17, 2.2), "#eee", "#999")],
  s15: box3(0), s16: box3(1), s17: box3(2),
  dimx: [s("M3 4v14M20 4v14M3 8h17M7 5l-4 3 4 3M16 5l4 3-4 3", "#b01010", 1.8), s("M3 21h18", "#111", 2.2)],
  dima: [s("M3 3v15M3 4q13 2 15 13M14 14l4 4 3-5M6 1L3 4l4 4", "#b01010", 1.8), s("M8 21h14", "#111", 2.2)],
  msg: [f("M12 2a9 9 0 0 1 3 17l-2 4-2-4a9 9 0 0 1 1-17z", "#d9ecfc", "#4a86c8"), tx("i", 12, 17, 16, "#14439c", { b: 1, serif: 1 })],
  lock: [s("M7 11V7q5-7 10 0v4", "#777", 2.2), f(re(4, 11, 16, 10), "#c4a72a", "#6d5c10"), s("M5 14h14M5 17h14", "#e8d46c", 1)],
  scroll: [f("M5 3h15q-4 3-2 9t-2 9H4q-2-3 2-5t-1-13z", "#f2f2f2", "#888")],
  cube0: [f(re(3, 2, 18, 20), "#f4f4f4", "#999"), f("M7 8l5-2 5 2v7l-5 4-5-4z", "#ddd", "#777"), f(re(9, 9, 5, 5), "#fff", "#888")],
  shoe: [f("M2 17q1-4 5-4l4-6 8 3 3 8-4 3H3z", "#7da6dc", "#2d5da8"), f("M10 8l7 3-5 4z", "#dcecff")],
  pinA: [s("M6 3h9v9M8 3v10M13 3v10M4 13h13M10 13v7M15 6h4v7", "#3b4854", 2)],
  pin: [s("M8 3h8v10M8 3v10M14 3v10M5 13h14M12 13v8", "#3b4854", 2)],
  xx: [s("M3 3l18 18M21 3L3 21", "#3b4854", 3.4)],
};

function Part({ p }) {
  if (p.t) return <g transform={p.t}>{p.p.map((q, i) => <Part key={i} p={q} />)}</g>;
  if (p.text)
    return (
      <text x={p.x} y={p.y} fontSize={p.size} fill={p.c} textAnchor="middle" fontWeight={p.b ? 700 : 400} fontStyle={p.i ? "italic" : "normal"} fontFamily={p.serif ? "Liberation Serif, serif" : "Liberation Sans, sans-serif"}>
        {p.text}
      </text>
    );
  return <path d={p.d} fill={p.f || "none"} stroke={p.c || "none"} strokeWidth={p.w} strokeDasharray={p.dash} />;
}
function Ic({ n, c = "size-[22px]" }) {
  return (
    <svg viewBox="0 0 24 24" className={`${c} shrink-0 overflow-visible`} aria-hidden="true">
      {ICONS[n].map((p, i) => <Part key={i} p={p} />)}
    </svg>
  );
}
const Tri = ({ c = "border-t-black" }) => <span className={`inline-block shrink-0 border-x-4 border-t-[5px] border-x-transparent ${c}`} />;
const TriUp = () => <span className="inline-block shrink-0 border-x-4 border-b-4 border-x-transparent border-b-[#333]" />;
const TriDown = () => <span className="inline-block shrink-0 border-x-4 border-t-4 border-x-transparent border-t-[#333]" />;
const Sep = () => <span className="mx-0.5 h-7 w-px shrink-0 bg-[#a3a3a3]" />;
const Grip = () => <span className="ml-0.5 mr-0.5 h-5 shrink-0 border-l-[3px] border-dotted border-[#b4b4b4]" />;

function Tool({ n, w = "w-7", on = false, corner = false }) {
  return (
    <button aria-label={n} className={`relative flex h-7 ${w} shrink-0 items-center justify-center ${on ? "border border-[#4a6fae] bg-[#f3b95c] bg-[radial-gradient(#8a5c1c_1px,transparent_1px)] bg-[size:4px_4px]" : ""}`}>
      <Ic n={n} />
      {corner && <span className="absolute bottom-0 right-0 border-x-[3px] border-t-4 border-x-transparent border-t-black" />}
    </button>
  );
}
const Drop = () => (
  <button aria-label="More" className="flex h-7 w-[15px] shrink-0 items-center justify-center"><Tri /></button>
);

/* "|" = separator, trailing "+" = drop-down arrow, trailing "." = corner arrow, trailing "*" = pressed */
function Tools({ list, w }) {
  return list.split(" ").map((n, i) => {
    if (n === "|") return <Sep key={i} />;
    const m = n.slice(-1);
    const id = "+.*".includes(m) ? n.slice(0, -1) : n;
    return (
      <React.Fragment key={i}>
        <Tool n={id} w={w} on={m === "*"} corner={m === "."} />
        {m === "+" && <Drop />}
      </React.Fragment>
    );
  });
}
function Bar({ children, c = "mr-[3px] pr-1" }) {
  return (
    <div role="toolbar" className={`flex h-[34px] shrink-0 items-center rounded-r-[4px] border-b border-[#c9c9c9] bg-gradient-to-b from-[#fbfbfb] via-[#f0f0f0] to-[#d9d9d9] ${c}`}>
      <Grip />
      {children}
    </div>
  );
}
function Select({ label, value, c, icon, pad = "pl-1" }) {
  return (
    <label className={`relative flex items-center ${c}`}>
      {icon && <span className="absolute left-1 flex"><Ic n={icon} c="size-4" /></span>}
      <select aria-label={label} className={`h-full w-full appearance-none rounded-[3px] border border-[#707070] bg-gradient-to-b from-[#f4f4f4] to-[#dcdcdc] ${pad} text-[11px] leading-none outline-none`}>
        <option>{value}</option>
      </select>
      <span className="pointer-events-none absolute right-[5px] flex"><Tri /></span>
    </label>
  );
}
function Attr({ n, v }) {
  return (
    <>
      <Sep />
      <Tool n={n} />
      <span className="w-[23px] text-center text-[12px]">{v}</span>
      <Drop />
    </>
  );
}
function Letters({ parts, w = "w-7", slash = false }) {
  return (
    <button className={`relative flex h-7 ${w} shrink-0 items-center justify-center text-[19px] leading-7`}>
      {parts.map(([t, c], i) => <span key={i} className={c}>{t}</span>)}
      {slash && <svg viewBox="0 0 28 28" className="absolute inset-0 size-7" aria-hidden="true"><path d="M3 25L14 3" stroke="#111" strokeWidth="2" /></svg>}
    </button>
  );
}

/* ---------- header ---------- */
function TitleBar() {
  return (
    <header className="flex h-[26px] shrink-0 items-center bg-[linear-gradient(90deg,#8fa5b8_0px,#b9c6d2_100px,#b3c2cf_380px,#6d8598_440px,#3c5669_510px,#5c8098_570px,#6d9dbc_600px,#3e6078_630px,#6aa0c4_690px,#8cc6e8_735px,#3a566c_790px,#3c5d78_850px,#8fd0f0_885px,#9ee2f4_960px,#96e2f4_1050px,#aef6f6_1150px,#b0f4f4_1310px,#84c8e4_1350px,#5c9cc8_1410px,#5a9ac6_1450px,#3a6c90_1510px,#5f9cc4_1560px,#74acd2_1640px,#5f92b8_1760px,#7fa6c6_1840px,#56748e_1921px)] shadow-[inset_0_-1px_0_#9fb8cc]">
      <Ic n="app" c="size-4" />
      <h1 className="ml-[5px] flex-1 truncate font-['Open_Sans','Noto_Sans',sans-serif] text-[12px] text-black">ASTM-SEED FILE-Final.dgn [2D - V8 DGN] - MicroStation V8i (SELECTseries 3)</h1>
      <div className="mr-1 flex h-[18px] self-start overflow-hidden rounded-b-[5px] border border-t-0 border-[#3d566c] text-white">
        <button aria-label="Minimize" className="flex w-7 items-end justify-center border-r border-[#3d566c] bg-[#8aa9c4] pb-1.5"><span className="h-1 w-3 border border-[#3d4a58] bg-white" /></button>
        <button aria-label="Restore" className="flex w-7 items-center justify-center border-r border-[#3d566c] bg-[#8aa9c4]"><span className="size-2.5 border-2 border-white outline outline-[#3d4a58]" /></button>
        <button aria-label="Close" className="flex w-[46px] items-center justify-center bg-[#86a3bd] text-[13px] font-bold">X</button>
      </div>
    </header>
  );
}
function Menu() {
  const items = [["", "F", "ile"], ["", "E", "dit"], ["E", "l", "ement"], ["", "S", "ettings"], ["", "T", "ools"], ["", "U", "tilities"], ["Wor", "k", "space"], ["", "W", "indow"], ["", "H", "elp"]];
  return (
    <nav className="flex h-[19px] shrink-0 items-center border-t border-[#3d566c] pb-px">
      <Grip />
      <div className="ml-2 flex gap-[13px]">
        {items.map(([a, u, z]) => <button key={u + z}>{a}<span className="underline underline-offset-2">{u}</span>{z}</button>)}
      </div>
    </nav>
  );
}

/* ---------- shared panel parts ---------- */
function PanelHead({ title, dual = true }) {
  return (
    <div className="flex h-5 shrink-0 items-center gap-[5px] bg-gradient-to-b from-[#b4c9dd] via-[#d3e0ec] to-[#f0f0f0] pl-[3px] pr-[5px] text-[#41505e]">
      <h2 className="flex-1 font-['Open_Sans','Noto_Sans',sans-serif] text-[11px]">{title}</h2>
      <button aria-label="Options" className="mr-0.5 flex"><Tri c="border-t-[#3b4854]" /></button>
      {dual && <button aria-label="Dock"><Ic n="pinA" c="size-3" /></button>}
      <button aria-label="Pin"><Ic n="pin" c="size-3" /></button>
      <button aria-label="Close"><Ic n="xx" c="size-[11px]" /></button>
    </div>
  );
}
const Ribs = () => (
  <span className="flex flex-col gap-0.5"><i className="h-px w-2 bg-[#555]" /><i className="h-px w-2 bg-[#555]" /><i className="h-px w-2 bg-[#555]" /><i className="h-px w-2 bg-[#555]" /></span>
);
function VScroll({ thumb, w = "w-[15px]" }) {
  return (
    <div className={`flex ${w} shrink-0 flex-col bg-[#ececec]`}>
      <button aria-label="Scroll up" className="flex h-4 shrink-0 items-center justify-center"><TriUp /></button>
      <div className="min-h-0 flex-1">
        <div className={`flex ${thumb} items-center justify-center rounded-[2px] border border-[#999] bg-gradient-to-r from-[#f6f6f6] to-[#c9c9cf]`}><Ribs /></div>
      </div>
      <button aria-label="Scroll down" className="flex h-4 shrink-0 items-center justify-center"><TriDown /></button>
    </div>
  );
}

/* ---------- left dock ---------- */
const TASKS = [
  ["Q", "smartline line mline point. curve. sketch stream angle minline atang"],
  ["W", "rect shape oshape poly"],
  ["E", "circle ellipse arc arc2 arc3 arc4 arc5 arc6"],
  ["R", "hat1 hat2 hat3 hat4 hat5 hat6 hat7 hat8"],
  ["T", "tag1 tag2 tag3 tag4 tag5"],
  ["A", "tA tA2 tA3 tA4 tA5 tA6 tA7 tA8 tA9 tA10 tA11 tA12 tA13 tA14"],
  ["", "c1 c2 c3 c4 c5 c6 c7"],
];
function TasksPanel() {
  const main = ["arrowsel", "fence", "manip", "view4", "palette", "acs", "scale", "delx", "measure"];
  return (
    <section className="flex h-[436px] flex-col bg-[#f0f0f0]">
      <PanelHead title="Tasks" />
      <button className="mx-1 mt-[5px] flex h-6 shrink-0 items-center rounded-t-[6px] border border-[#5e5e5e] bg-white pl-1 font-['DejaVu_Sans',sans-serif] text-[11px]">
        <Ic n="shoe" c="size-[15px]" />
        <span className="ml-1.5 flex-1 text-left">Tasks</span>
        <span className="flex h-full w-[26px] items-center justify-center border-l border-[#888]"><Tri /></span>
      </button>
      <div className="mx-1 mt-1.5 flex h-[34px] shrink-0 items-center rounded-[6px] bg-white pl-[5px]">
        {main.map((n, i) => (
          <button key={n} aria-label={n} className={`relative flex size-7 shrink-0 items-center justify-center ${i === 0 ? "border border-[#4a6fae] bg-gradient-to-br from-[#d99a58] to-[#ffc873]" : ""}`}>
            <Ic n={n} />
            <span className="absolute bottom-0.5 left-0 h-3 w-[11px] border-r border-t border-[#777] bg-white/60 text-center text-[12px] leading-3 text-[#777]">{i + 1}</span>
            {i > 0 && i !== 7 && <span className="absolute bottom-0.5 right-0 border-y-[3px] border-l-[3px] border-y-transparent border-l-black" />}
          </button>
        ))}
      </div>
      <div className="mb-[5px] ml-1 mr-1 mt-1.5 flex min-h-0 flex-1">
        <div className="flex min-w-0 flex-1 flex-col">
          <div className="flex h-[22px] shrink-0 items-center rounded-t-[4px] bg-gradient-to-b from-white via-[#e4f3fc] to-[#b4e0f8] pl-1 pr-1.5">
            <Ic n="smartline" c="size-4" />
            <h3 className="ml-[7px] flex-1 font-['DejaVu_Sans',sans-serif] text-[11px] font-bold">Drawing</h3>
            <svg viewBox="0 0 70 14" className="h-3.5 w-[70px]" fill="#222" aria-hidden="true">
              <path d="M1 1h6v5H1zM9 1h6v5H9zM1 8h6v5H1zM9 8h6v5H9zM20 1h12v2H20zM20 6h12v2H20zM20 11h12v2H20zM37 1h13v5H37zM37 8h13v5H37z" />
              <path d="M57 11l6-6 6 6" fill="none" stroke="#222" strokeWidth="3" />
            </svg>
          </div>
          <div className="mt-0.5 min-h-0 flex-1 overflow-hidden bg-white px-1">
            {TASKS.map(([k, list]) => (
              <div key={k} className="flex border-b border-[#8c8c8c] pt-px">
                <span className="flex w-4 shrink-0 items-center justify-center bg-gradient-to-r from-[#f6f5f8] to-[#d6d3de] text-[14px] text-[#8a8a92]">{k}</span>
                <div className="flex w-[200px] flex-wrap"><Tools list={list} /></div>
              </div>
            ))}
          </div>
        </div>
        <div className="ml-1 flex"><VScroll thumb="h-2/3" /></div>
      </div>
    </section>
  );
}
function SelBtn({ n, on }) {
  return (
    <button aria-label={n} className={`flex size-5 items-center justify-center ${on ? "border border-[#5a6fa0] bg-[#fbc878]" : ""}`}><Ic n={n} c="size-3.5" /></button>
  );
}
function SelectionPanel() {
  const types = ["Annotation Cell", "Arc", "Associative Region", "B-spline Curve", "B-spline Surface", "Cell", "Complex Chain", "Complex Shape", "Cone", "Curve", "Detail Callout", "Detail Callout 2D View"];
  const tab = "flex h-5 flex-1 items-center justify-center border border-b-0 border-[#8a8a8a]";
  return (
    <section className="flex min-h-0 flex-1 flex-col bg-[#f0f0f0]">
      <PanelHead title="Element Selection" />
      <div className="ml-[23px] mt-[7px] flex gap-[18px]">
        <div className="w-[109px]">
          <div className="flex h-[27px] items-center gap-px border-l border-t border-[#9a9a9a] pl-0.5">
            <SelBtn n="selInd" on /><SelBtn n="selBlock" /><SelBtn n="selShape" /><SelBtn n="selCircle" /><SelBtn n="selLine" />
          </div>
          <div className="flex h-[27px] items-center gap-px border-l border-t border-[#9a9a9a] pl-0.5">
            <SelBtn n="selNew" on /><SelBtn n="selPlus" /><SelBtn n="selMinus" /><SelBtn n="selInv" /><SelBtn n="selAll" />
          </div>
        </div>
        <div className="flex flex-col gap-1.5 pt-1">
          <button aria-label="Disable handles"><Ic n="stop" c="size-5" /></button>
          <button aria-label="Pick"><Ic n="graycur" c="size-5" /></button>
        </div>
        <button aria-label="Collapse" className="mb-1 self-end"><span className="block border-x-[5px] border-b-[6px] border-x-transparent border-b-black" /></button>
      </div>
      <div className="ml-4 mt-[9px] w-[187px]">
        <div className="ml-[7px] flex gap-px">
          {["tLayers", "tColor", "tStyle", "tWeight"].map((n) => <button key={n} aria-label={n} className={`${tab} bg-gradient-to-b from-[#f4f4f4] to-[#d4d4d4]`}><Ic n={n} c="size-3.5" /></button>)}
        </div>
        <div className="border-r border-t border-[#8a8a8a] pr-1">
          <div className="flex gap-px">
            {["tTypes", "tTag", "template"].map((n, i) => <button key={n} aria-label={n} className={`${tab} ${i ? "bg-gradient-to-b from-[#f4f4f4] to-[#d4d4d4]" : "bg-white"}`}><Ic n={n} c="size-3.5" /></button>)}
          </div>
          <div className="border border-t-0 border-[#8a8a8a] bg-[#f0f0f0] px-1.5 py-[7px]">
            <div className="flex h-[208px] border-2 border-[#8a8a8a] bg-white">
              <div className="min-w-0 flex-1">
                <div className="flex h-[21px] items-center border-b-2 border-[#777] bg-gradient-to-b from-white to-[#eef1f5] pl-[5px]">
                  <span className="flex-1">Element Type</span>
                  <span className="mb-2 mr-2 border-x-[3px] border-t-[3px] border-x-transparent border-t-[#4f8fae]" />
                </div>
                <ul className="pl-1 pt-[3px] leading-[15px]">{types.map((t) => <li key={t} className="whitespace-nowrap">{t}</li>)}</ul>
              </div>
              <VScroll thumb="h-[37px]" />
            </div>
          </div>
        </div>
      </div>
    </section>
  );
}

/* ---------- design view ---------- */
const ROAD = [[55, 40], [200, 188], [270, 255], [375, 355], [450, 422], [550, 525], [655, 622], [740, 694], [820, 775], [895, 855], [980, 935], [1060, 1012], [1170, 1112], [1260, 1200], [1330, 1270], [1440, 1372], [1472, 1403], [1478, 1425], [1464, 1446], [1345, 1498], [1320, 1490], [1190, 1375], [1090, 1270], [985, 1175], [880, 1080]];
const line = (pts, dx = 0, dy = 0) => "M" + pts.map(([x, y]) => `${x + dx} ${y + dy}`).join("L");
function makeRandom(seed) {
  let v = seed;
  return () => (v = (v * 16807) % 2147483647) / 2147483647;
}
function scatter() {
  const rnd = makeRandom(7);
  const out = [];
  for (let i = 0; i < ROAD.length - 1; i++) {
    const [x0, y0] = ROAD[i];
    const [x1, y1] = ROAD[i + 1];
    const len = Math.hypot(x1 - x0, y1 - y0);
    const late = i > 9;
    for (let d = 0; d < len; d += late ? 9 : 6) {
      const t = d / len;
      const r = rnd();
      const color = late ? (r < 0.2 ? "#9c5410" : r < 0.42 ? "#35e8e0" : r < 0.5 ? "#19e03c" : r < 0.62 ? "#1450ff" : null) : r < 0.36 ? "#1248ff" : r < 0.74 ? "#35f0e4" : r < 0.82 ? "#19d83c" : null;
      if (color) out.push([x0 + (x1 - x0) * t + (rnd() - 0.5) * 12, y0 + (y1 - y0) * t + (rnd() - 0.5) * 12, 4 + rnd() * 7, 4 + rnd() * 6, color]);
    }
  }
  return out;
}
/* stepped raster tiles laid under a stretch of road */
function raster(pts, seed) {
  const rnd = makeRandom(seed);
  const tones = ["#4a4744", "#57524d", "#625a53", "#3f3d3b", "#6f675f", "#504c49"];
  const out = [];
  for (let i = 0; i < pts.length - 1; i++) {
    const [x0, y0] = pts[i];
    const [x1, y1] = pts[i + 1];
    const len = Math.hypot(x1 - x0, y1 - y0);
    for (let d = 0; d < len; d += 5) {
      const t = d / len;
      const x = x0 + (x1 - x0) * t;
      const y = y0 + (y1 - y0) * t;
      for (let k = 0; k < 5; k++) {
        const o = (rnd() - 0.5) * 38;
        const nx = (-(y1 - y0) / len) * o;
        const ny = ((x1 - x0) / len) * o;
        out.push([x + nx, y + ny, tones[Math.floor(rnd() * tones.length)]]);
      }
    }
  }
  return out;
}
const SEGMENTS = [[[78, 66], [213, 196]], [[748, 708], [875, 835]], ROAD.slice(11)];
const RASTER = SEGMENTS.flatMap((g, i) => raster(g, 11 + i));
const DOTS = scatter();
const TILES = [[235, 226], [358, 343], [376, 359], [433, 410], [481, 458], [534, 510], [584, 556], [640, 606], [693, 659], [724, 690], [881, 844], [941, 898], [997, 949], [1052, 1004], [852, 1066]];
const BLOBS = [
  ["M188 190l4-14 8-4-2 20z", "#ff0000"], ["M975 928l8-4 7 10-8 10-8-6z", "#ff0000"],
  ["M1148 1095l16-4 24 28 14 24-8 6-26-28z", "#ff0000"], ["M1250 1195l10-8 12 6-6 14-16 2z", "#ff0000"], ["M1324 1268l14-2 2 12-10 2z", "#ff0000"],
  ["M984 1170l10-4 26 24-4 10-14-4z", "#ff0000"], ["M1026 1218l16-2 26 20-6 12-20-4z", "#ff0000"], ["M1066 1254l12-4 14 10-10 8z", "#ff0000"], ["M1180 1370l14-4 6 10-12 8z", "#ff0000"],
  ["M434 412l14-6 6 14-12 12-8-8z", "#b0620f"], ["M940 892l14 6 14 14-8 4-18-16z", "#9c5410"], ["M266 256l10-2 4 10-10 2z", "#a85a10"], ["M298 280l10 4 6 10-8-2z", "#a85a10"],
  ["M988 940l10 2 4 12-10-2zM1030 976l12 4 2 10-10-2zM1042 990l12 4 2 8-10 0z", "#a85a10"],
  ["M1080 1028l10 6 6 8-10-2z", "#9c5410"], ["M1106 1052l12 8 20 18-6 4-22-18z", "#9c5410"], ["M1186 1132l8 4 6 8-8 2z", "#9c5410"], ["M1212 1150l12 8 10 8-10 2z", "#9c5410"], ["M1342 1284l10 4 12 12-10 0zM1372 1308l14 6 6 12-12-2z", "#9c5410"],
  ["M1302 1472l10 8 2 10-8-6z", "#a85a10"], ["M1466 1402l14 4 0 12-10-6z", "#a85a10"], ["M1430 1464l8-2 2 12-8-2zM1452 1452l14-4 2 10-14 2z", "#a85a10"], ["M952 1132l8 4 0 10-8-2z", "#a85a10"],
  ["M228 214l10 0 12 20-8 2z", "#19e03c"], ["M716 676l8 4 30 26-6 4z", "#19f018"], ["M780 738l20 14 10 16-12 0z", "#2ff0e8"],
  ["M812 770l8-2 16 18-8 8z", "#6fa0b8"], ["M1072 1266l12-2 4 10-8 6-8-6z", "#6fa0b8"], ["M1008 964l12-2 2 12-10 4z", "#27b8f0"],
];
function DesignView() {
  const vbtn = "flex h-[17px] w-[30px] justify-center rounded-[3px] border";
  return (
    <main className="flex min-w-0 flex-1 flex-col">
      <div className="flex h-[30px] shrink-0 items-center border-t border-[#2c3a4a] bg-gradient-to-b from-[#98b4d4] to-[#b4cde6] pl-1 pr-0.5 pt-[5px]">
        <span className="flex size-3.5 items-center justify-center rounded-[2px] bg-[#c8d4e2]"><i className="size-[7px] bg-[#222]" /></span>
        <h2 className="ml-2 flex-1 font-['Open_Sans','Noto_Sans',sans-serif] text-[12px] leading-4 text-[#111]">View 1, Model</h2>
        <div className="flex gap-[3px]">
          <button aria-label="Minimize view" className={`${vbtn} items-end border-[#5c7390] bg-gradient-to-b from-[#d6e3f1] to-[#a9c2de] pb-1`}><i className="h-1 w-3 border border-[#445] bg-white" /></button>
          <button aria-label="Restore view" className={`${vbtn} items-center border-[#5c7390] bg-gradient-to-b from-[#d6e3f1] to-[#a9c2de]`}><i className="size-2 border-2 border-white outline outline-[#445]" /></button>
          <button aria-label="Close view" className={`${vbtn} items-center border-[#5a1a14] bg-gradient-to-b from-[#e8a090] to-[#c0301c] text-[11px] font-bold leading-[14px] text-white`}>x</button>
        </div>
      </div>
      <div className="min-h-0 flex-1 overflow-hidden bg-black">
        <svg viewBox="0 0 1369 837" preserveAspectRatio="xMinYMin meet" className="h-full w-full" aria-label="Road survey">
          <g transform="translate(314 7) scale(.4847 .5294)" fill="none">
            <g shapeRendering="crispEdges">
              <path d="M44 34h46l14 16 2 14-12 18-16 12H54l-17-14V42z" fill="#4b4b4b" />
              {TILES.map(([x, y], i) => <path key={i} d={`M${x} ${y}h34v31h-34z`} fill={i % 3 ? "#5a5450" : "#484848"} />)}
            </g>
            {SEGMENTS.map((g, i) => <path key={i} d={line(g)} stroke="#4b4743" strokeWidth="38" strokeLinejoin="round" />)}
            <g shapeRendering="crispEdges">
              {RASTER.map(([x, y, c], i) => <path key={i} d={`M${x - 4} ${y - 4}h8v8h-8z`} fill={c} />)}
            </g>
            <path d={line(ROAD.slice(0, 12))} stroke="#0808d0" strokeWidth="6" strokeDasharray="60 12 90 8" />
            <path d={line(ROAD, 8, -7)} stroke="#0a0af0" strokeWidth="4" />
            <path d={line([...ROAD, [865, 1096]], -7, 6)} stroke="#0a0af0" strokeWidth="4" />
            <path d="M55 42L110 96" stroke="#1240ff" strokeWidth="12" />
            <path d="M460 440L520 496M830 790L950 900" stroke="#1040ff" strokeWidth="10" />
            {DOTS.map(([x, y, w, h, c], i) => <path key={i} d={`M${x - w / 2} ${y - h / 2}h${w}v${h}h${-w}z`} fill={c} />)}
            {BLOBS.map(([d, c], i) => <path key={i} d={d} fill={c} stroke={c} strokeWidth="3" strokeLinejoin="round" />)}
          </g>
          <g fill="#191919" stroke="#4c4c4c" strokeWidth="1.5">
            <path d="M60 721l17 20h-8v21H51v-21h-8zM73 768h23v-9l20 17-20 17v-9H73z" />
            <circle cx="60" cy="776" r="8" />
            <circle cx="60" cy="776" r="2" fill="#777" />
          </g>
          <g fill="#808080" fontFamily="Liberation Sans, sans-serif" fontSize="19" textAnchor="middle">
            <text x="60" y="756">Y</text>
            <text x="88" y="783">X</text>
          </g>
        </svg>
      </div>
    </main>
  );
}

/* ---------- level display ---------- */
const USED = ["Default", "Crack_Alligator_High", "Crack_Alligator_Low", "Crack_Alligator_Medium", "Crack_Longitudinale_High", "Crack_Longitudinale_Low", "Crack_Longitudinale_Medium", "Crack_Patch_High", "Crack_Patch_Low", "Crack_Patch_Medium", "Crack_Transveralse_High", "Crack_Transveralse_Low", "Crack_Transveralse_Medium", "Road_edge", "Run_100"];
const UNUSED = ["All road width", "Areas", "Crack_Block_High", "Crack_Block_Low", "Crack_Block_Medium", "Crack_Edge_High", "Crack_Edge_Low", "Crack_Edge_Medium", "Crack_Pothole_High", "Crack_Pothole_Low", "Crack_Pothole_Medium", "Delete", "Direction B", "Direction F", "Geo3D Tiffs", "ID_Segment", "Invisible", "Largeur", "lines", "Mitwl"];
function LevelDisplay() {
  const refs = ["Final preparation of segments of Gt21-1-...", "image1749-shp z8.dgn", "Parts of area 169 not finished.dgn"];
  return (
    <aside className="flex w-[270px] shrink-0 flex-col bg-[#f0f0f0]">
      <PanelHead title="Level Display - View 1" dual={false} />
      <div className="mt-1 flex h-7 items-center pl-2">
        <button aria-label="Views" className="w-[22px]"><Ic n="wins" c="size-5" /></button>
        <button aria-label="Pick level" className="ml-2.5"><Ic n="winpick" c="size-[22px]" /></button>
        <Select label="Display type" value="View Display" c="ml-[11px] h-4 w-[102px]" />
      </div>
      <div className="mt-[5px] flex h-8 items-center pl-2">
        <button aria-label="Change level"><Ic n="laypick" c="size-[22px]" /></button>
        <button aria-label="Tree" className="ml-[9px] flex size-7 items-center justify-center border border-[#5a6fa0] bg-[#fbc878]"><Ic n="treeview" c="size-[22px]" /></button>
        <button aria-label="Filter" className="ml-[7px] flex items-center"><Ic n="filter" c="size-[22px]" /><span className="mx-[5px]">(none)</span><Tri /></button>
        <Select label="List" value="Levels" c="ml-2 h-4 w-[55px]" />
        <button aria-label="Symbology" className="ml-2 flex items-center"><Ic n="handpic" c="size-[22px]" /><span className="ml-[7px] flex"><Tri /></span></button>
      </div>
      <div className="ml-0.5 mr-px mt-[3px] flex h-[141px] shrink-0 flex-col border border-[#7a7a7a] bg-white">
        <div className="flex-1 pl-1.5 pt-[3px]">
          <div className="flex h-[18px] items-center">
            <span className="flex size-[9px] items-center justify-center border border-[#8a8aa0]"><i className="h-px w-[5px] bg-[#3a4a8c]" /></span>
            <i className="h-px w-1 bg-[#888]" />
            <Ic n="v8on" c="size-4" />
            <span className="ml-0.5 border border-[#a9d4ee] bg-[#dff1fb] px-px leading-[14px]">ASTM-SEED FILE-Final.dgn</span>
          </div>
          <ul className="ml-[22px] text-[#8a8a8a]">
            {refs.map((r, i) => (
              <li key={r} className="flex h-[18px] items-center">
                <span className={`w-px shrink-0 self-start bg-[#888] ${i === 2 ? "h-[9px]" : "h-[18px]"}`} />
                <i className="h-px w-2 shrink-0 bg-[#888]" />
                <Ic n="v8off" c="size-4" />
                <span className="ml-0.5 truncate">{r}</span>
              </li>
            ))}
          </ul>
        </div>
        <div className="flex h-[15px] items-center bg-[#ececec] px-1">
          <span className="border-y-4 border-r-[5px] border-y-transparent border-r-[#333]" />
          <div className="mx-2 h-full flex-1"><div className="flex h-full w-[142px] items-center justify-center gap-0.5 rounded-[2px] border border-[#999] bg-gradient-to-b from-[#f6f6f6] to-[#c9c9cf]"><i className="h-[7px] w-px bg-[#444]" /><i className="h-[7px] w-px bg-[#444]" /><i className="h-[7px] w-px bg-[#444]" /></div></div>
          <span className="border-y-4 border-l-[5px] border-y-transparent border-l-[#333]" />
        </div>
      </div>
      <div className="mb-[3px] ml-0.5 mr-px mt-2 flex min-h-0 flex-1 border border-[#7a7a7a] bg-white">
        <div className="min-w-0 flex-1 overflow-hidden pl-0.5">
          <table className="w-full table-fixed border-collapse text-left">
            <thead>
              <tr className="h-[25px] border-b-2 border-[#777] bg-gradient-to-b from-white to-[#f1f3f6]">
                <th className="pb-[5px] pl-1.5 font-normal">Name</th>
                <th className="w-[76px] border-l border-[#dcdcdc] pb-[5px] pl-[18px] font-normal">
                  <span className="flex gap-2.5">Used<span className="mt-0.5 self-start border-x-[3px] border-t-[3px] border-x-transparent border-t-[#4f8fae]" /></span>
                </th>
              </tr>
            </thead>
            <tbody>
              {USED.map((n) => (
                <tr key={n} className={`h-[17px] text-[12px] font-bold leading-[15px] ${n === "Default" ? "bg-[#008080] text-white" : n === "Run_100" ? "bg-white text-[#3399ff]" : "bg-[#3399ff] text-white"}`}>
                  <td className="whitespace-nowrap p-0 pl-0.5">{n}</td>
                  <td className="p-0 pl-[34px]"><span className={`block size-[5px] rounded-full ${n === "Run_100" ? "bg-black" : "bg-white"}`} /></td>
                </tr>
              ))}
              {UNUSED.map((n) => (
                <tr key={n} className="h-[17px] bg-[#3399ff] leading-[15px] text-[#e6f2ff]">
                  <td className="p-0 pl-0.5">{n}</td><td className="p-0" />
                </tr>
              ))}
            </tbody>
          </table>
        </div>
        <div className="mx-0.5 flex"><VScroll thumb="h-[72%]" w="w-[14px]" /></div>
      </div>
    </aside>
  );
}

/* ---------- bottom ---------- */
function BottomBar() {
  return (
    <div className="flex h-[34px] shrink-0 items-center border-b border-[#9a9a9a] bg-[#ececec]">
      <Bar c="pr-2"><Tools list="vattr. sun+ | brush zin zout zwin fit rotview. hand feet fly | vprev vnext | vcopy persp. clipv. mask" /></Bar>
      <Bar c="pr-1">
        <Tools list="back+ fwd+ saved" />
        <Drop />
        <Select label="View group" value="Model" icon="vgrp" pad="pl-6" c="ml-0.5 h-[19px] w-[128px]" />
        <span className="w-px" /><Sep /><Tool n="vgrp" /><Sep />
        <div className="ml-0.5 flex">
          {[1, 2, 3, 4, 5, 6, 7, 8].map((v) => (
            <button key={v} className={`h-5 w-3.5 border-l-2 border-[#222] text-[12px] leading-5 ${v === 1 ? "bg-[#fbc878]" : "bg-gradient-to-b from-[#f2f2f2] to-[#cfcfcf]"}`}>{v}</button>
          ))}
        </div>
      </Bar>
      <Bar c="pr-1"><span className="w-0.5" /><Tools list="snapx | s1 s2* s3 s4 s5 s6 s7 s8 s9 s10 s11 s12 s13 s14 s15 s16 s17" /></Bar>
      <Bar>
        <label className="flex items-center gap-1 pl-2"><Ic n="dimx" c="size-[18px]" /><input aria-label="Distance" defaultValue="0.0000" className="h-[18px] w-[136px] border border-[#9a9a9a] bg-white pl-1 text-[12px] text-[#777]" /></label>
        <span className="w-1.5" /><Sep />
        <label className="flex items-center gap-1 pl-1.5 pr-3"><Ic n="dima" c="size-[18px]" /><input aria-label="Angle" className="h-[18px] w-[136px] border border-[#9a9a9a] bg-white pl-1 text-[12px]" /></label>
      </Bar>
    </div>
  );
}
function Status() {
  const cell = "flex h-full items-center border-l-2 border-t border-[#a8a8a8]";
  const small = [null, null, null, "scroll", "levdisp", null, "cube0"];
  return (
    <footer className="flex h-[26px] shrink-0 items-stretch pt-0.5 text-[11px]">
      <p className="flex w-[393px] items-center border-r border-[#a8a8a8] pl-[3px]">Element Selection &gt; Identify element to add to set</p>
      <Grip />
      <p className="flex flex-1 items-center gap-1 border-l border-[#a8a8a8] pl-1"><Ic n="msg" c="size-[18px]" />View display of the active level is currently off</p>
      <div className="flex border-l border-[#a8a8a8] pr-[3px]">
        <div className={`${cell} w-7 justify-center`}><Ic n="s2" c="size-3.5" /></div>
        <div className={`${cell} w-7 justify-center`}><Ic n="lock" c="size-3.5" /></div>
        <div className={`${cell} w-[116px] pl-0.5`}>Default</div>
        <div className={`${cell} w-[105px]`} />
        {small.map((n, i) => <div key={i} className={`${cell} w-7 justify-center`}>{n && <Ic n={n} c="size-4" />}</div>)}
      </div>
    </footer>
  );
}

export default function App() {
  return (
    <div className="flex h-screen flex-col overflow-hidden bg-[#f0f0f0] font-['Liberation_Sans',Arial,sans-serif] text-[11px] text-black">
      <TitleBar />
      <Menu />
      <div className="flex h-[34px] shrink-0">
        <Bar>
          <Tools list="template+" /><Sep />
          <Select label="Active level" value="Default" c="mx-[3px] h-5 w-[127px]" />
          <Attr n="colorfill" v="1" /><Attr n="lstyle" v="0" /><Attr n="lweight" v="1" /><Attr n="transp" v="0" /><Attr n="prio" v="0" />
          <span className="w-0.5" />
        </Bar>
        <Bar><Tools list="scale delelem ext ext2 trim inter mod1 mod2 fillet chamfer" /></Bar>
        <Bar><Tools list="palette attrs attrs2 pens | hatchpen | pal2 pal3" /></Bar>
        <Bar><Tools list="grp1 grp2 grp3 grp4 grp5" /></Bar>
        <Bar><Tools list="levmgr+ levdisp+" /></Bar>
        <Bar><Tools list="acs acs2 acs3 acs4 | grid gridx donut" /></Bar>
        <Bar><Tools list="m1 m2 m3 m4 m5 m6 | m7 m8 m9 m10 | scale. | acs5." /></Bar>
      </div>
      <div className="flex h-[34px] shrink-0">
        <Bar><Tools list="model+ refs+ cloud+ raster+ levmgr+ levdisp+ acsd+ info tree folders ptree accu" /></Bar>
        <Bar>
          <Letters parts={[["R", "text-[#e01818]"]]} w="w-5" />
          <Letters parts={[["R", "text-[#e01818]"], ["M", "text-[#1a1ab8]"]]} w="w-9" />
          <Letters parts={[["M", "text-[#1a1ab8]"]]} w="w-6" />
          <Letters parts={[["R", "text-[#e01818]"], ["S", "font-bold text-[#0fe01a]"]]} />
          <Letters parts={[["R", "text-[#e01818]"], ["S", "font-bold text-[#0fe01a]"]]} slash />
          <Letters parts={[["D", "font-bold text-[#f01ae8]"]]} w="w-[26px]" />
          <Letters parts={[["D", "text-[#f01ae8]"], ["S", "font-bold text-[#0fe01a]"]]} />
          <Tools list="hist1 hist2 arr1 arr2 arr3 arr4" w="w-[27px]" />
        </Bar>
        <Bar><Tools list="newf open save | print | cut copy paste | undo redo | geo | help" /></Bar>
        <Bar><Tools list="ggl" /></Bar>
        <Bar><Tools list="rotview | cTop cFront cRight cBack | cBot cLeft cIso" /></Bar>
        <Bar><Tools list="clip0+ | clip1 clip2 clip3 clip4 car1 car2" /></Bar>
        <Bar><Tools list="palette attrs attrs2 pens hatchpen pal2 pal3" /></Bar>
      </div>
      <div className="flex min-h-0 flex-1">
        <div className="flex w-[276px] shrink-0 flex-col border-r-[5px] border-[#acacd8]">
          <TasksPanel />
          <div className="h-1.5 shrink-0 bg-[#acacd8]" />
          <SelectionPanel />
        </div>
        <DesignView />
        <div className="w-[6px] shrink-0 bg-[#acacd8]" />
        <LevelDisplay />
      </div>
      <BottomBar />
      <Status />
    </div>
  );
}
